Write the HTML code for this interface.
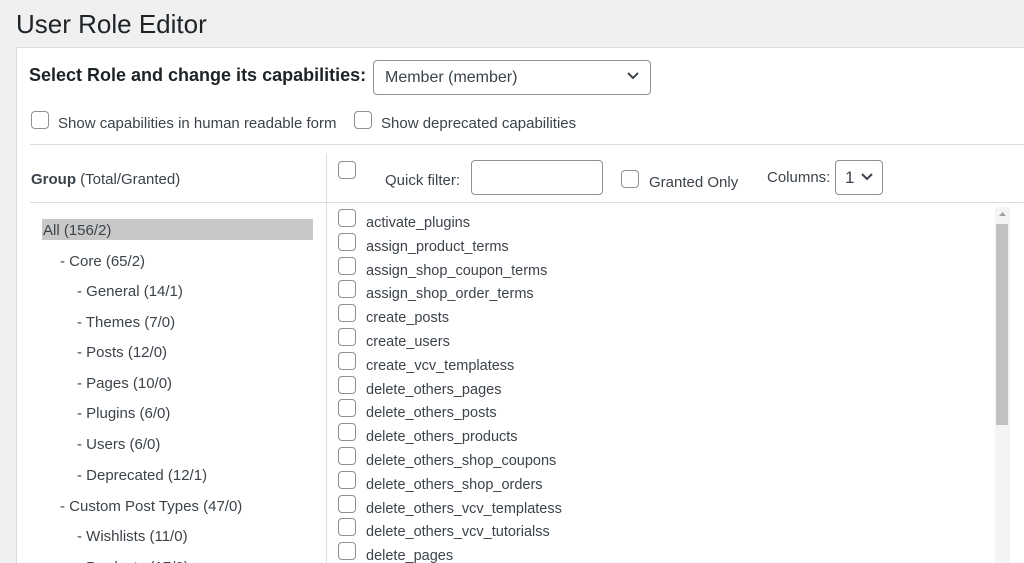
<!DOCTYPE html>
<html><head><meta charset="utf-8"><style>
html,body{margin:0;width:1024px;height:563px;overflow:hidden}
body{background:#f0f0f1;font-family:"Liberation Sans",sans-serif;color:#3c434a;position:relative}
.a{position:absolute;white-space:nowrap}
.cb{position:absolute;width:16px;height:16px;border:1px solid #8c8f94;border-radius:4px;background:#fff}
.t{position:absolute;font-size:15px;white-space:nowrap}
.l{position:absolute;font-size:14.5px;white-space:nowrap}
</style></head><body>
<div class="a" style="left:16px;top:9px;font-size:26px;color:#1d2327">User Role Editor</div>
<div class="a" style="left:16px;top:47px;width:1020px;height:515px;background:#fff;border:1px solid #dcdcde;border-bottom:none"></div>
<div class="a" style="left:29px;top:65px;font-size:18px;font-weight:bold;color:#1d2327">Select Role and change its capabilities:</div>
<div class="a" style="left:373px;top:60px;width:276px;height:33px;border:1px solid #8c8f94;border-radius:4px;background:#fff"></div>
<div class="t" style="left:385px;top:69px;font-size:16px">Member (member)</div>
<svg class="a" style="left:626px;top:71px" width="14" height="10"><path d="M2 2l5 5 5-5" fill="none" stroke="#3c434a" stroke-width="2"/></svg>
<div class="cb" style="left:31px;top:111px"></div>
<div class="t" style="left:58px;top:115px">Show capabilities in human readable form</div>
<div class="cb" style="left:354px;top:111px"></div>
<div class="t" style="left:381px;top:115px">Show deprecated capabilities</div>
<div class="a" style="left:30px;top:144px;width:994px;height:1px;background:#dcdcde"></div>
<div class="a" style="left:30px;top:202px;width:994px;height:1px;background:#dcdcde"></div>
<div class="a" style="left:326px;top:153px;width:1px;height:420px;background:#dcdcde"></div>
<div class="t" style="left:31px;top:171px"><b>Group</b> (Total/Granted)</div>
<div class="cb" style="left:338px;top:161px"></div>
<div class="t" style="left:385px;top:172px">Quick filter:</div>
<div class="a" style="left:471px;top:160px;width:130px;height:33px;border:1px solid #8c8f94;border-radius:4px"></div>
<div class="cb" style="left:621px;top:170px"></div>
<div class="t" style="left:649px;top:174px">Granted Only</div>
<div class="t" style="left:767px;top:169px">Columns:</div>
<div class="a" style="left:835px;top:160px;width:46px;height:33px;border:1px solid #8c8f94;border-radius:4px"></div>
<div class="t" style="left:845px;top:168px;font-size:17px">1</div>
<svg class="a" style="left:860px;top:172px" width="14" height="10"><path d="M2 2l5 5 5-5" fill="none" stroke="#3c434a" stroke-width="2"/></svg>
<div class="a" style="left:42px;top:219px;width:271px;height:21px;background:#c8c8c8"></div>
<div class="t" style="left:43px;top:222px">All (156/2)</div>
<div class="t" style="left:60px;top:253px">- Core (65/2)</div>
<div class="t" style="left:77px;top:283px">- General (14/1)</div>
<div class="t" style="left:77px;top:314px">- Themes (7/0)</div>
<div class="t" style="left:77px;top:344px">- Posts (12/0)</div>
<div class="t" style="left:77px;top:375px">- Pages (10/0)</div>
<div class="t" style="left:77px;top:405px">- Plugins (6/0)</div>
<div class="t" style="left:77px;top:436px">- Users (6/0)</div>
<div class="t" style="left:77px;top:467px">- Deprecated (12/1)</div>
<div class="t" style="left:60px;top:498px">- Custom Post Types (47/0)</div>
<div class="t" style="left:77px;top:528px">- Wishlists (11/0)</div>
<div class="t" style="left:77px;top:559px">- Products (17/0)</div>
<div id="list"></div>
<div class="a" style="left:995px;top:207px;width:15px;height:360px;background:#f4f4f4"></div>
<svg class="a" style="left:998px;top:211px" width="9" height="6"><path d="M1 5l3.5-4 3.5 4z" fill="#a0a0a0"/></svg>
<div class="a" style="left:996px;top:224px;width:12px;height:201px;background:#c1c1c1"></div>
<script>
var caps=["activate_plugins","assign_product_terms","assign_shop_coupon_terms","assign_shop_order_terms","create_posts","create_users","create_vcv_templatess","delete_others_pages","delete_others_posts","delete_others_products","delete_others_shop_coupons","delete_others_shop_orders","delete_others_vcv_templatess","delete_others_vcv_tutorialss","delete_pages"];
var h="";caps.forEach(function(c,i){var y=207+i*23.8;h+='<div class="cb" style="left:338px;top:'+(y+2)+'px"></div><div class="l" style="left:366px;top:'+(y+8)+'px">'+c+'</div>';});
document.getElementById("list").innerHTML=h;
</script>
</body></html>
